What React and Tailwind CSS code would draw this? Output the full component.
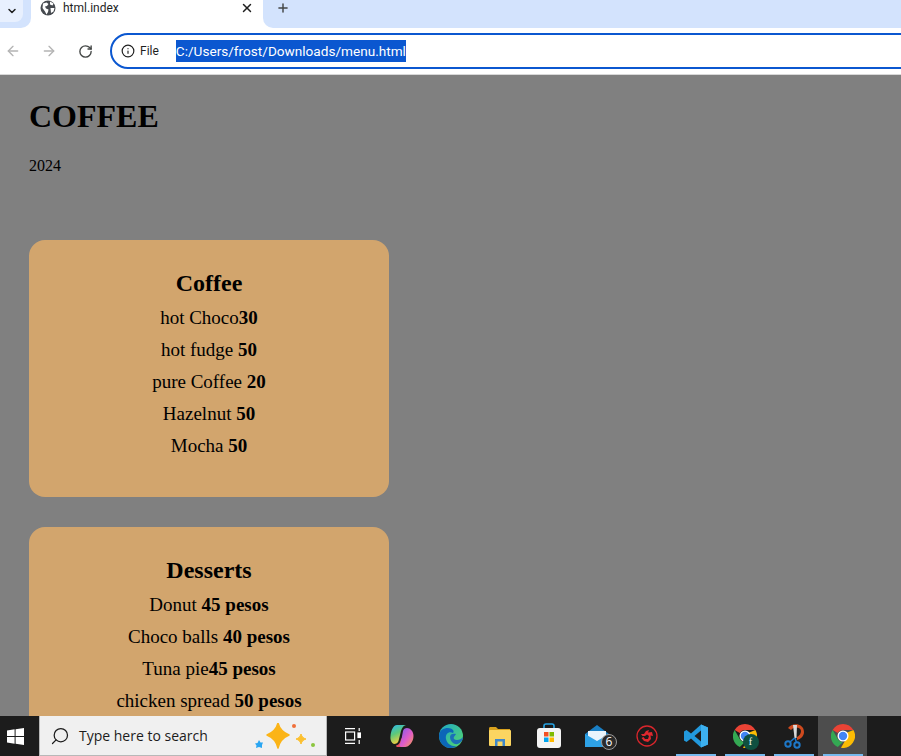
import { ArrowLeft, ArrowRight, RotateCw, Info, X, Plus, ChevronDown, Search } from 'lucide-react';

const GlobeIcon = () => (
    <svg width="16" height="16" viewBox="0 0 16 16">
        <circle cx="8" cy="8" r="7.5" fill="#474b50" />
        <path d="M3 3.5 L6.5 2.5 L8.5 4 L7 6 L5 6.5 L6 8.5 L8.5 9.5 L8 12 L6.5 14.5 L5 11.5 L2.5 8 Z M10 1.5 L13.5 3.5 L12.5 5.5 L10 4.5 Z M10.5 8 L14.5 8 L13.5 11.5 L11 13 Z" fill="#fff" />
    </svg>
);

const WindowsLogo = () => (
    <svg width="17" height="17" viewBox="0 0 17 17" fill="#fff">
        <path d="M0 2.4 L7.6 1.3 V8 H0 Z M8.6 1.2 L17 0 V8 H8.6 Z M0 9 H7.6 V15.7 L0 14.6 Z M8.6 9 H17 V17 L8.6 15.8 Z" />
    </svg>
);

const Sparkles = () => (
    <svg width="62" height="34" viewBox="0 0 62 34">
        <path d="M24 0 C25.500 6 29 9.500 35 12 C29 14.500 25.500 18 24 25 C22.500 18 19 14.500 13 12 C19 9.500 22.500 6 24 0 Z" fill="#fbb417" stroke="#fbb417" strokeWidth="1.500" strokeLinejoin="round" />
        <path d="M47 11 C48 14 49 15 52 16 C49 17 48 18 47 21 C46 18 45 17 42 16 C45 15 46 14 47 11 Z" fill="#fcc02e" stroke="#fcc02e" strokeWidth="1" strokeLinejoin="round" />
        <path d="M5 17 L6.500 19.500 L9 19.500 L8 22 L8 25 L5 24 L2 25 L2.500 22.500 L1 20.500 L3.500 20 Z" fill="#2aa6f2" />
        <circle cx="40" cy="3" r="2" fill="#f0703a" />
        <circle cx="59" cy="22" r="2" fill="#8cc63f" />
    </svg>
);

const TaskView = () => (
    <svg width="16" height="16" viewBox="0 0 16 16" fill="none" stroke="#fff" strokeWidth="1.2">
        <path d="M0 0.6 H10 M0 15.4 H10" />
        <rect x="0.6" y="4" width="9" height="8" />
        <rect x="13" y="5" width="2.500" height="4.500" fill="#fff" />
        <path d="M14.2 0 V3 M14.200 12 V16" />
    </svg>
);

const Copilot = () => (
    <svg width="24" height="24" viewBox="0 0 24 24">
        <defs>
            <linearGradient id="cpa" x1="0" y1="0" x2="1" y2="1">
                <stop offset="0" stopColor="#7a5cf0" />
                <stop offset="0.55" stopColor="#e05cc8" />
                <stop offset="1" stopColor="#f7a04a" />
            </linearGradient>
            <linearGradient id="cpb" x1="0" y1="0" x2="0.4" y2="1">
                <stop offset="0" stopColor="#2bb8f0" />
                <stop offset="0.5" stopColor="#5cc87a" />
                <stop offset="1" stopColor="#f7d03c" />
            </linearGradient>
            <linearGradient id="cpc" x1="0" y1="0" x2="1" y2="1">
                <stop offset="0" stopColor="#e84a8a" />
                <stop offset="1" stopColor="#f2553a" />
            </linearGradient>
        </defs>
        <path d="M7 1 H16 C12.500 2 11.500 5 10.500 9 L8.500 17 C8 19 6 20 4 20 C1.500 19 0 16 0.500 12 C1 7 3 1 7 1 Z" fill="url(#cpb)" />
        <path d="M8 23 C7 23 6 22.500 6 21.500 C9 21 10 19 11 15 L13 13 L15.500 23 Z" fill="url(#cpc)" />
        <path d="M13 23 C11 23 9.500 22.500 9.500 21.500 C10 20 11 17 11.500 15 L13 7 C13.500 5 15 4 17 4 C20 4 23.500 7 23.500 12 C23.500 18 19 23 15 23 Z" fill="url(#cpa)" />
    </svg>
);

const Edge = () => (
    <svg width="24" height="24" viewBox="0 0 24 24">
        <defs>
            <linearGradient id="eg" x1="0" y1="0" x2="1" y2="1">
                <stop offset="0" stopColor="#1fa8c8" />
                <stop offset="1" stopColor="#56d868" />
            </linearGradient>
        </defs>
        <circle cx="12" cy="12" r="12" fill="url(#eg)" />
        <path d="M0 12 C0 6 5 4 9 4 C13 4 16 7 14 9 C10 7 6 10 7 15 C8 20 13 23 18 22 C15 24 12 24 11 24 C5 24 0 18 0 12 Z" fill="#0c66b8" />
        <path d="M11 13 C11 10 14 9 17 10 C16 12 14 13 15 15 C17 17 22 16 24 13 C24 17 20 21 16 20 C13 19 11 16 11 13 Z" fill="#1b6fb8" />
    </svg>
);

const Explorer = () => (
    <svg width="22" height="19" viewBox="0 0 22 19">
        <path d="M0 1.500 C0 0.700 0.500 0 1.500 0 H7 L9 2 H21 V6 H0 Z" fill="#d9a21e" />
        <rect x="0" y="3" width="22" height="16" rx="1" fill="#fbd561" />
        <path d="M6 19 V12 H16 V19 H13.500 V14.500 H8.500 V19 Z" fill="#3f87c9" />
    </svg>
);

const Store = () => (
    <svg width="24" height="26" viewBox="0 0 24 26">
        <path d="M7 8 V3 C7 1.500 8 1 9 1 H15 C16 1 17 1.500 17 3 V8" fill="none" stroke="#27a4e3" strokeWidth="1.6" />
        <rect x="0" y="5" width="24" height="20" rx="3" fill="#f4f4f4" />
        <rect x="7" y="9" width="4.500" height="4.500" fill="#f25022" />
        <rect x="12.500" y="9" width="4.500" height="4.500" fill="#7fba00" />
        <rect x="7" y="14.500" width="4.500" height="4.500" fill="#00a4ef" />
        <rect x="12.500" y="14.500" width="4.500" height="4.500" fill="#ffb900" />
    </svg>
);

const Mail = () => (
    <div className="relative w-[24px] h-[22px] ml-[-1px]">
        <svg width="24" height="22" viewBox="0 0 24 22">
            <path d="M0 9 L12 0 L24 9 V22 H0 Z" fill="#1a7fc4" />
            <path d="M3 6 H21 V14 L12 19 L3 14 Z" fill="#e8f4fc" />
            <path d="M0 9 L12 16 L24 9 V22 H0 Z" fill="#2ea2e6" />
        </svg>
        <div className="absolute left-[16px] top-[9px] w-[16px] h-[16px] rounded-full bg-[#2b2b2b] border border-[#9a9a9a] flex items-center justify-center text-[12px] leading-none text-white font-['Open_Sans',sans-serif]">
            6
        </div>
    </div>
);

const IObit = () => (
    <svg width="22" height="22" viewBox="0 0 22 22">
        <circle cx="11" cy="11" r="10" fill="#1b1b1b" stroke="#d9262c" strokeWidth="1.3" />
        <path d="M5 9 L8 9 L10 6 L13 5 L12 7.500 L16 7 L17 11 L14.500 10.500 L15 14 L12 17 L8 16 L5.500 13 L7.500 12 L9 14 L12 14 L13 11 L11 9.500 L9 11 L6.500 11 Z" fill="#e0282e" />
    </svg>
);

const VSCode = () => (
    <svg width="24" height="24" viewBox="0 0 24 24">
        <path d="M17 0.500 L24 3.500 V20.500 L17 23.500 L7 14.500 L2.500 18 L0 16.500 V7.500 L2.500 6 L7 9.500 Z M17 6.500 L10.500 12 L17 17.500 Z" fill="#2299dd" />
        <path d="M17 0.500 L24 3.500 V20.500 L17 23.500 Z" fill="#3db0ef" />
    </svg>
);

const Chrome = () => (
    <svg width="24" height="24" viewBox="0 0 24 24">
        <path d="M12 0 A12 12 0 0 1 22.400 6 H12 A6 6 0 0 0 6.800 9 L1.600 6 A12 12 0 0 1 12 0 Z" fill="#ea4335" />
        <path d="M1.600 6 L6.800 15 A6 6 0 0 0 12 18 L6.800 23 A12 12 0 0 1 1.600 6 Z" fill="#34a853" />
        <path d="M22.400 6 A12 12 0 0 1 10 23.800 L15.100 15 A6 6 0 0 0 15.100 9 Z" fill="#fbbc04" />
        <circle cx="12" cy="12" r="5.500" fill="#fff" />
        <circle cx="12" cy="12" r="4.200" fill="#4285f4" />
    </svg>
);

const ChromeProfile = () => (
    <div className="relative w-[24px] h-[24px]">
        <Chrome />
        <div className="absolute left-[10px] top-[10px] w-[16px] h-[16px] rounded-full bg-[#0f5040] flex items-center justify-center text-[10px] leading-none text-white font-['Liberation_Serif',serif]">
            f
        </div>
    </div>
);

const Snip = () => (
    <svg width="24" height="26" viewBox="0 0 24 26">
        <path d="M6 5 C10 -1 22 0 22 9 C22 13 19 16 15 17 L15 14 C17 13 19 11 19 8 C19 4 12 3 9 7 Z" fill="#cf4a1e" />
        <path d="M11 2 H15 L14.500 15 L12.500 15 Z" fill="#d8d8d8" />
        <circle cx="6" cy="21" r="2.700" fill="none" stroke="#1e78c8" strokeWidth="2" />
        <circle cx="15" cy="22" r="2.700" fill="none" stroke="#1e78c8" strokeWidth="2" />
        <path d="M8 19 L12.500 15 M14.500 19.500 L13 15" stroke="#1e78c8" strokeWidth="1.500" />
    </svg>
);

const Slot = ({ children, line, active }) => (
    <div className={`relative w-[49px] h-full flex items-center justify-center ${active ? 'bg-[#4d4d4d]' : ''}`}>
        {children}
        {line && <div className="absolute bottom-0 left-[5px] right-[4px] h-[2px] bg-[#76b9ed]" />}
    </div>
);

const MenuCard = ({ title, items }) => (
    <div className="w-[360px] shrink-0 bg-[#d2a56d] rounded-[16px] pt-[30px] pb-[35px] px-5 text-center">
        <h2 className="text-[24px] leading-[27px] font-bold">{title}</h2>
        <div className="mt-[5px]">
            {items.map((item, i) => (
                <p key={i} className="text-[19px] leading-[22px] py-[5px]">
                    {item[0]}<b>{item[1]}</b>
                </p>
            ))}
        </div>
    </div>
);

const App = () => {
    return (
        <div className="h-screen flex flex-col overflow-hidden bg-white">
            {/* Tab strip */}
            <div className="h-[28px] shrink-0 flex bg-white font-['Roboto',sans-serif]">
                <div className="w-[31px] bg-[#d3e3fd] rounded-br-[10px]">
                    <div className="w-[23px] h-[22px] bg-[#e8f0fe] rounded-br-[8px] flex items-center justify-center">
                        <ChevronDown size={12} strokeWidth={3} className="text-[#1f1f1f]" />
                    </div>
                </div>
                <div className="w-[232px] flex items-start pl-[9px] pr-[9px]">
                    <GlobeIcon />
                    <span className="ml-[7px] text-[12px] leading-[17px] text-[#1f1f1f]">html.index</span>
                    <X size={14} strokeWidth={2.5} className="ml-auto mt-[1px] text-[#1f1f1f]" />
                </div>
                <div className="flex-1 bg-[#d3e3fd] rounded-bl-[10px] pl-[13px]">
                    <Plus size={14} strokeWidth={2.5} className="mt-[1px] text-[#444746]" />
                </div>
            </div>

            {/* Toolbar */}
            <div className="h-[47px] shrink-0 flex items-center bg-white border-b border-[#d8d8d8] font-['Roboto',sans-serif]">
                <ArrowLeft size={16} strokeWidth={2} className="ml-[5px] text-[#b4b4b4]" />
                <ArrowRight size={16} strokeWidth={2} className="ml-[20px] text-[#b4b4b4]" />
                <RotateCw size={15} strokeWidth={2.2} className="ml-[21px] text-[#444746]" />
                <div className="ml-[17px] flex-1 -mr-[30px] h-[36px] -mt-[1px] rounded-full border-2 border-[#0b57d0] bg-white flex items-center pl-[9px]">
                    <Info size={14} strokeWidth={2} className="text-[#1f1f1f]" />
                    <span className="ml-[5px] text-[12px] text-[#1f1f1f]">File</span>
                    <span className="ml-[17px] bg-[#0b57d0] text-white text-[13.6px] leading-[22px]">C:/Users/frost/Downloads/menu.html</span>
                </div>
            </div>

            {/* Page */}
            <main className="flex-1 min-h-0 overflow-hidden bg-[#808080] pl-[29px] text-black font-['Liberation_Serif',serif]">
                <h1 className="mt-[23px] text-[32px] leading-[37px] font-bold">COFFEE</h1>
                <p className="mt-[22px] text-[16px] leading-[18px]">2024</p>
                <div className="mt-[65px] flex flex-col gap-[30px]">
                    <MenuCard
                        title="Coffee"
                        items={[
                            ['hot Choco', '30'],
                            ['hot fudge ', '50'],
                            ['pure Coffee ', '20'],
                            ['Hazelnut ', '50'],
                            ['Mocha ', '50'],
                        ]}
                    />
                    <MenuCard
                        title="Desserts"
                        items={[
                            ['Donut ', '45 pesos'],
                            ['Choco balls ', '40 pesos'],
                            ['Tuna pie', '45 pesos'],
                            ['chicken spread ', '50 pesos'],
                        ]}
                    />
                </div>
            </main>

            {/* Taskbar */}
            <div className="h-[40px] shrink-0 flex bg-[#1c1c1c]">
                <div className="w-[39px] flex items-center justify-center pr-[9px]">
                    <WindowsLogo />
                </div>
                <div className="w-[288px] bg-[#f0f0f0] border-x border-b border-[#b8b8b8] flex items-center pl-[10px] relative font-['Open_Sans',sans-serif]">
                    <Search size={20} strokeWidth={1.5} className="-scale-x-100 text-[#1c1c1c]" />
                    <span className="ml-[9px] text-[14px] text-[#1c1c1c]">Type here to search</span>
                    <div className="absolute right-[10px] top-[7px]">
                        <Sparkles />
                    </div>
                </div>
                <div className="flex h-full pl-[1px]">
                    <Slot><TaskView /></Slot>
                    <Slot><Copilot /></Slot>
                    <Slot><Edge /></Slot>
                    <Slot><Explorer /></Slot>
                    <Slot><Store /></Slot>
                    <Slot><Mail /></Slot>
                    <Slot><IObit /></Slot>
                    <Slot line><VSCode /></Slot>
                    <Slot line><ChromeProfile /></Slot>
                    <Slot line><Snip /></Slot>
                    <Slot line active><Chrome /></Slot>
                </div>
            </div>
        </div>
    );
};

export default App;
